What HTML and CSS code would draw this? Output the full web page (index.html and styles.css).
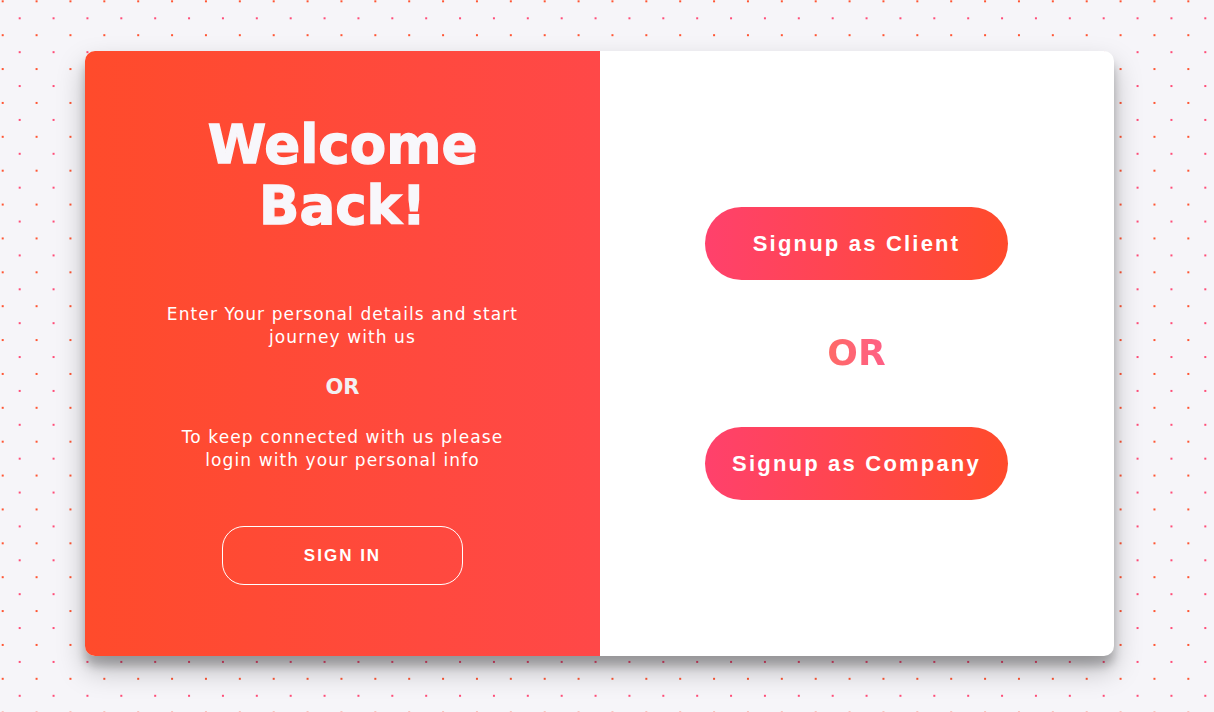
FILE: index.html
```html
<!DOCTYPE html>
<html lang="en">
<head>
<meta charset="utf-8">
<title>Welcome Back</title>
<link rel="stylesheet" href="styles.css">
</head>
<body>
  <div class="card">
    <section class="panel-left">
      <h1 class="title">Welcome<br>Back!</h1>
      <p class="text text-first">Enter Your personal details and start journey with us</p>
      <div class="or-small">OR</div>
      <p class="text">To keep connected with us please login with your personal info</p>
      <button class="btn-ghost">SIGN IN</button>
    </section>
    <section class="panel-right">
      <button class="btn-fill">Signup as Client</button>
      <div class="or-big">OR</div>
      <button class="btn-fill">Signup as Company</button>
    </section>
  </div>
</body>
</html>
```
FILE: styles.css
```css
* { box-sizing: border-box; }
html, body { height: 100%; }
body {
  margin: 0;
  padding: 51px 0 0 85px;
  background-color: #f6f5f9;
  background-image:
    radial-gradient(circle, #ff5533 0.9px, transparent 1.3px),
    radial-gradient(circle, #ff4d78 0.9px, transparent 1.3px);
  background-size: 33.88px 33.88px;
  background-position: -14.24px -15.64px, 2.76px 1.36px;
  font-family: "DejaVu Sans", "Liberation Sans", sans-serif;
  overflow: hidden;
}
.card {
  width: 1029px;
  height: 605px;
  display: flex;
  border-radius: 10px;
  overflow: hidden;
  background: #fff;
  box-shadow: 0 14px 28px rgba(0,0,0,0.25), 0 10px 10px rgba(0,0,0,0.22);
}
.panel-left {
  width: 515px;
  background: linear-gradient(to right, #ff4b2b, #ff4848);
  display: flex;
  flex-direction: column;
  align-items: center;
  justify-content: center;
  color: #fff;
  text-align: center;
  padding-bottom: 8px;
}
.title {
  margin: 0;
  font-size: 53px;
  line-height: 61px;
  font-weight: 800;
  color: #f8f7fb;
  letter-spacing: 0;
  -webkit-text-stroke: 1.3px #f8f7fb;
}
.text {
  margin: 0;
  width: 360px;
  font-size: 17px;
  line-height: 23px;
  font-weight: 400;
  letter-spacing: 1.1px;
}
.text-first { margin-top: 67px; }
.or-small {
  margin: 25px 0 26px;
  font-size: 21px;
  font-weight: 800;
  color: #f2f0f2;
  line-height: 26px;
}
.btn-ghost {
  margin-top: 54px;
  width: 241px;
  height: 59px;
  border: 1px solid #fff;
  border-radius: 22px;
  background: transparent;
  color: #fff;
  font-family: "Liberation Sans", Arial, sans-serif;
  font-weight: 700;
  font-size: 17px;
  letter-spacing: 2px;
}
.panel-right {
  flex: 1;
  display: flex;
  flex-direction: column;
  align-items: center;
  justify-content: center;
  padding-right: 1px;
}
.btn-fill {
  width: 303px;
  height: 73px;
  border: 0;
  border-radius: 37px;
  background: linear-gradient(to right, #ff416c, #ff4b2b);
  color: #fff;
  font-family: "Liberation Sans", Arial, sans-serif;
  font-weight: 700;
  font-size: 22px;
  letter-spacing: 2.2px;
  padding: 0;
}
.or-big {
  margin: 54px 0 55px;
  font-size: 36px;
  line-height: 38px;
  font-weight: 800;
  background: linear-gradient(to right, #ff6a66, #ff5f86);
  -webkit-background-clip: text;
  background-clip: text;
  color: transparent;
}
```
